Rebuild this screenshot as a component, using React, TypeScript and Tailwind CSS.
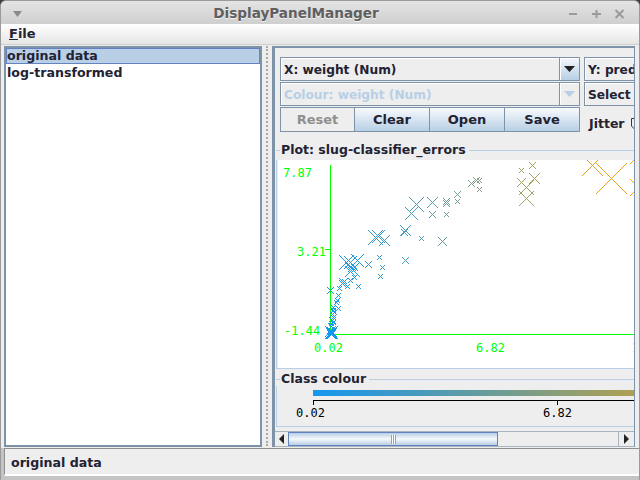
import React from 'react';

const boldFont = "font-['DejaVu_Sans',sans-serif] font-bold";

// cx, cy, half-width in pixels, in page coordinates
const crosses: number[][] = [
  [416, 204, 7], [411, 213, 6], [432, 202, 5], [446, 201, 3], [446, 203, 3], [432, 214, 3], [446, 214, 2],
  [457, 194, 3], [457, 201, 2], [375, 237, 7], [378, 236, 6], [384, 240, 5], [405, 230, 5], [404, 232, 3],
  [421, 238, 2], [442, 241, 4], [405, 260, 3], [379, 257, 2], [382, 267, 2], [380, 276, 2], [368, 264, 3],
  [346, 262, 7], [350, 262, 6], [357, 260, 6], [352, 269, 7], [350, 271, 5], [354, 267, 3], [352, 269, 3], [350, 269, 2], [353, 268, 2], [354, 277, 2],
  [350, 280, 2], [358, 286, 2], [343, 282, 4], [342, 283, 3], [343, 282, 2], [344, 281, 2], [347, 286, 2], [339, 288, 2], [330, 290, 3],
  [338, 295, 2], [337, 300, 2], [336, 302, 2], [338, 308, 2], [333, 307, 2], [334, 309, 1], [333, 310, 2], [334, 312, 2], [332, 314, 2], [333, 317, 2], [332, 320, 3],
  [331, 323, 2], [333, 322, 2], [331, 326, 3], [331, 332, 6], [330, 331, 5], [331, 333, 5], [330, 333, 3], [331, 331, 3], [332, 332, 4], [331, 334, 4], [330, 330, 3],
  [471, 183, 3], [476, 180, 3], [479, 180, 2], [479, 189, 2],
  [532, 165, 3], [521, 170, 2], [534, 178, 5], [521, 182, 4], [526, 187, 7], [526, 198, 7],
  [592, 165, 10], [611, 178, 15], [633, 160, 3], [638, 187, 8],
];

function crossColour(x: number) {
  const t = Math.min((x - 330) / 320, 1);
  const r = Math.round(20 + 235 * t);
  const g = Math.round(151 + 14 * t);
  const b = Math.round(240 - 240 * t);
  return `rgb(${r},${g},${b})`;
}

// one pixel per step along both diagonals, like java's unantialiased lines
function crossPath(x: number, y: number, r: number) {
  let d = '';
  for (let k = -r; k <= r; k++) {
    d += `M${x + k} ${y + k}h1v1h-1zM${x + k} ${y - k}h1v1h-1z`;
  }
  return d;
}

const Combo: React.FC<{ label: string; disabled?: boolean }> = ({ label, disabled }) => (
  <div className="h-[24px] flex border border-[#7f93a8] bg-[#eeeeee]">
    <div className={`flex-1 flex items-center pl-[3px] pt-[2px] border-r border-[#7f93a8] shadow-[inset_1px_1px_0_#ffffff] whitespace-nowrap overflow-hidden text-[12.2px] ${boldFont} ${disabled ? 'text-[#b8cfe5]' : 'text-[#222233]'}`}>
      {label}
    </div>
    <div className={`w-[19px] flex items-center justify-center shadow-[inset_1px_1px_0_#ffffff] ${disabled ? 'bg-[#eeeeee]' : 'bg-gradient-to-b from-[#f4f7fb] to-[#b8cfe5]'}`}>
      <svg width="11" height="6" viewBox="0 0 11 6">
        <path d="M0 0H11L5.5 6Z" fill={disabled ? '#b8cfe5' : '#222222'} />
      </svg>
    </div>
  </div>
);

const Btn: React.FC<{ label: string; disabled?: boolean }> = ({ label, disabled }) => (
  <div className={`w-[75px] flex items-center justify-center border-y border-r first:border-l border-[#7f93a8] text-[13px] ${boldFont} ${disabled ? 'text-[#8f8f8f] bg-[#eeeeee]' : 'text-[#222233] bg-gradient-to-b from-[#f8fafc] to-[#b8cfe5]'}`}>
    {label}
  </div>
);

const GroupTitle: React.FC<{ label: string }> = ({ label }) => (
  <div className="flex items-center">
    <div className="w-[4px] h-px bg-[#b8cfe5] ml-px" />
    <span className={`ml-px text-[12.5px] ${boldFont} text-[#222233]`}>{label}</span>
    <div className="flex-1 h-px bg-[#b8cfe5] ml-[3px]" />
  </div>
);

const App: React.FC = () => {
  return (
    <div className="w-[640px] h-[480px] bg-[#3c3c3c] overflow-hidden">
      <div className="w-[640px] h-[480px] rounded-t-[6px] overflow-hidden flex flex-col bg-[#c4c4c4] border-x border-t border-[#9a9a9a]">
        {/* title bar */}
        <div className="h-[23px] flex items-center justify-between bg-gradient-to-b from-[#e4e4e4] to-[#cfcfcf] px-[12px] pt-[2px]">
          <svg width="10" height="6" viewBox="0 0 10 6"><path d="M0 0H9L4.5 6Z" fill="#8a8a8a" /></svg>
          <span className={`ml-[2px] text-[13.6px] ${boldFont} text-[#5f5f5f] [text-shadow:0_1px_0_#f2f2f2]`}>DisplayPanelManager</span>
          <div className="flex items-center gap-[10px] pr-[1px]">
            <svg width="13" height="10" viewBox="0 0 13 10"><path d="M2 5H10" stroke="#9b9b9b" strokeWidth="2" /></svg>
            <svg width="13" height="10" viewBox="0 0 13 10"><path d="M2 5H11M6.5 1V9" stroke="#9b9b9b" strokeWidth="2" /></svg>
            <svg width="13" height="10" viewBox="0 0 13 10"><path d="M2.5 1L10.5 9M10.5 1L2.5 9" stroke="#9b9b9b" strokeWidth="2" /></svg>
          </div>
        </div>

        {/* menu */}
        <div className="h-[21px] flex items-center pl-[8px] bg-gradient-to-b from-[#ffffff] to-[#e6e6e6] border-b border-[#cfcfcf]">
          <span className={`text-[13px] ${boldFont} text-[#222233]`}><span className="underline">F</span>ile</span>
        </div>

        {/* main */}
        <div className="flex-1 flex bg-[#eeeeee] pl-[3px] pt-[1px] min-h-0">
          <div className="w-[258px] h-[401px] border-2 border-[#7f93a8] bg-white text-[12.6px]">
            <div className={`h-[16px] flex items-center bg-[#b8cfe5] border border-[#6382bf] ${boldFont} text-[#222233]`}>original data</div>
            <div className={`h-[19px] flex items-center pl-px ${boldFont} text-[#222233]`}>log-transformed</div>
          </div>

          <div className="w-[10px] flex justify-center">
            <div className="w-[2px] h-[400px] border-l-2 border-dotted border-[#a9a9a9] ml-[-1px]" />
          </div>

          {/* right scroll pane */}
          <div className="w-[363px] h-[401px] border-l-[3px] border-t-2 border-r border-[#7f93a8] flex flex-col">
            <div className="flex-1 overflow-hidden min-h-0">
              <div className="w-[600px] flex flex-col">
                <div className="flex gap-[4px] pl-[5px] pt-[9px]">
                  <div className="w-[300px] flex flex-col gap-[1px]">
                    <Combo label="X: weight (Num)" />
                    <Combo label="Colour: weight (Num)" disabled />
                    <div className="flex h-[25px]">
                      <Btn label="Reset" disabled />
                      <Btn label="Clear" />
                      <Btn label="Open" />
                      <Btn label="Save" />
                    </div>
                  </div>
                  <div className="w-[200px] flex flex-col gap-[1px]">
                    <Combo label="Y: predicted (Num)" />
                    <Combo label="Select Instance" />
                    <div className="flex items-center h-[25px] pl-[5px] pt-[10px]">
                      <span className={`text-[12.5px] ${boldFont} text-[#222233]`}>Jitter</span>
                      <svg className="ml-[5px]" width="12" height="15" viewBox="0 0 12 15">
                        <path d="M1.5 1.5H10.5V9L6 13.5L1.5 9Z" fill="#eeeeee" stroke="#33363c" />
                      </svg>
                    </div>
                  </div>
                </div>

                {/* plot */}
                <div className="h-[16px] mt-[10px] mb-[2px] flex flex-col justify-center w-[359px]">
                  <GroupTitle label="Plot: slug-classifier_errors" />
                </div>
                <div className="ml-[1px] border-l border-b border-[#b8cfe5] pl-[1px] w-[358px]">
                  <svg width="356" height="208" viewBox="278 160 356 208" className="block bg-white" fontFamily="'DejaVu Sans Mono', monospace" fontSize="12" fill="#00ff00">
                    <g shapeRendering="crispEdges" fill="#00ff00">
                      <rect x="330" y="165" width="1" height="170" />
                      <rect x="330" y="334" width="304" height="1" />
                      <rect x="325" y="249" width="5" height="1" />
                    </g>
                    <text x="283" y="177">7.87</text>
                    <text x="297" y="256">3.21</text>
                    <text x="284" y="335">-1.44</text>
                    <text x="314" y="352">0.02</text>
                    <text x="476" y="352">6.82</text>
                    <text x="632" y="352">1</text>
                    <g shapeRendering="crispEdges">
                      {crosses.map(([x, y, r], i) => (
                        <path key={i} d={crossPath(x, y, r)} fill={crossColour(x)} />
                      ))}
                    </g>
                  </svg>
                </div>

                {/* colour legend */}
                <div className="h-[13px] mt-[4px] flex flex-col justify-center w-[359px]">
                  <GroupTitle label="Class colour" />
                </div>
                <div className="ml-[1px] border-l border-b border-[#b8cfe5] pt-[4px] pl-[36px] h-[41px] w-[358px] overflow-hidden">
                  <div className="w-[488px] h-[6px] bg-[linear-gradient(90deg,#1497f0,#ffa500)]" />
                  <svg width="322" height="26" viewBox="313 397 322 26" className="block mt-[1px] overflow-visible" fontFamily="'DejaVu Sans Mono', monospace" fontSize="12" fill="#000000">
                    <path d="M313.5 405V400.5H634M557.5 400.5V405" fill="none" stroke="#000000" shapeRendering="crispEdges" />
                    <text x="296" y="417">0.02</text>
                    <text x="543" y="417">6.82</text>
                  </svg>
                </div>
              </div>
            </div>

            {/* scrollbar */}
            <div className="h-[16px] flex border-y border-[#a8b4c0] bg-[#eeeeee] mt-auto">
              <div className="w-[13px] flex items-center justify-center">
                <svg width="5" height="10" viewBox="0 0 5 10"><path d="M5 0V10L0 5Z" fill="#222222" /></svg>
              </div>
              <div className="w-[210px] flex items-center justify-center border border-[#6382bf] bg-gradient-to-b from-[#b8cfe5] via-[#f6f9fc] to-[#b8cfe5]">
                <div className="w-[5px] h-[9px] border-x border-[#8fa3c4] bg-[linear-gradient(90deg,#ffffff_40%,#8fa3c4_40%,#8fa3c4_60%,#ffffff_60%)]" />
              </div>
              <div className="flex-1" />
              <div className="w-[16px] flex items-center justify-center border-l border-[#a8b4c0]">
                <svg width="5" height="10" viewBox="0 0 5 10"><path d="M0 0V10L5 5Z" fill="#222222" /></svg>
              </div>
            </div>
          </div>
        </div>

        {/* status */}
        <div className="h-[32px] flex pl-[3px] pb-[4px] bg-[#c4c4c4]">
          <div className={`flex-1 flex items-center pl-[6px] pt-[3px] border-t border-l border-[#8f8f8f] border-b-2 border-b-white bg-[#eeeeee] text-[12.6px] ${boldFont} text-[#222233]`}>
            original data
          </div>
        </div>
      </div>
    </div>
  );
};

export default App;
